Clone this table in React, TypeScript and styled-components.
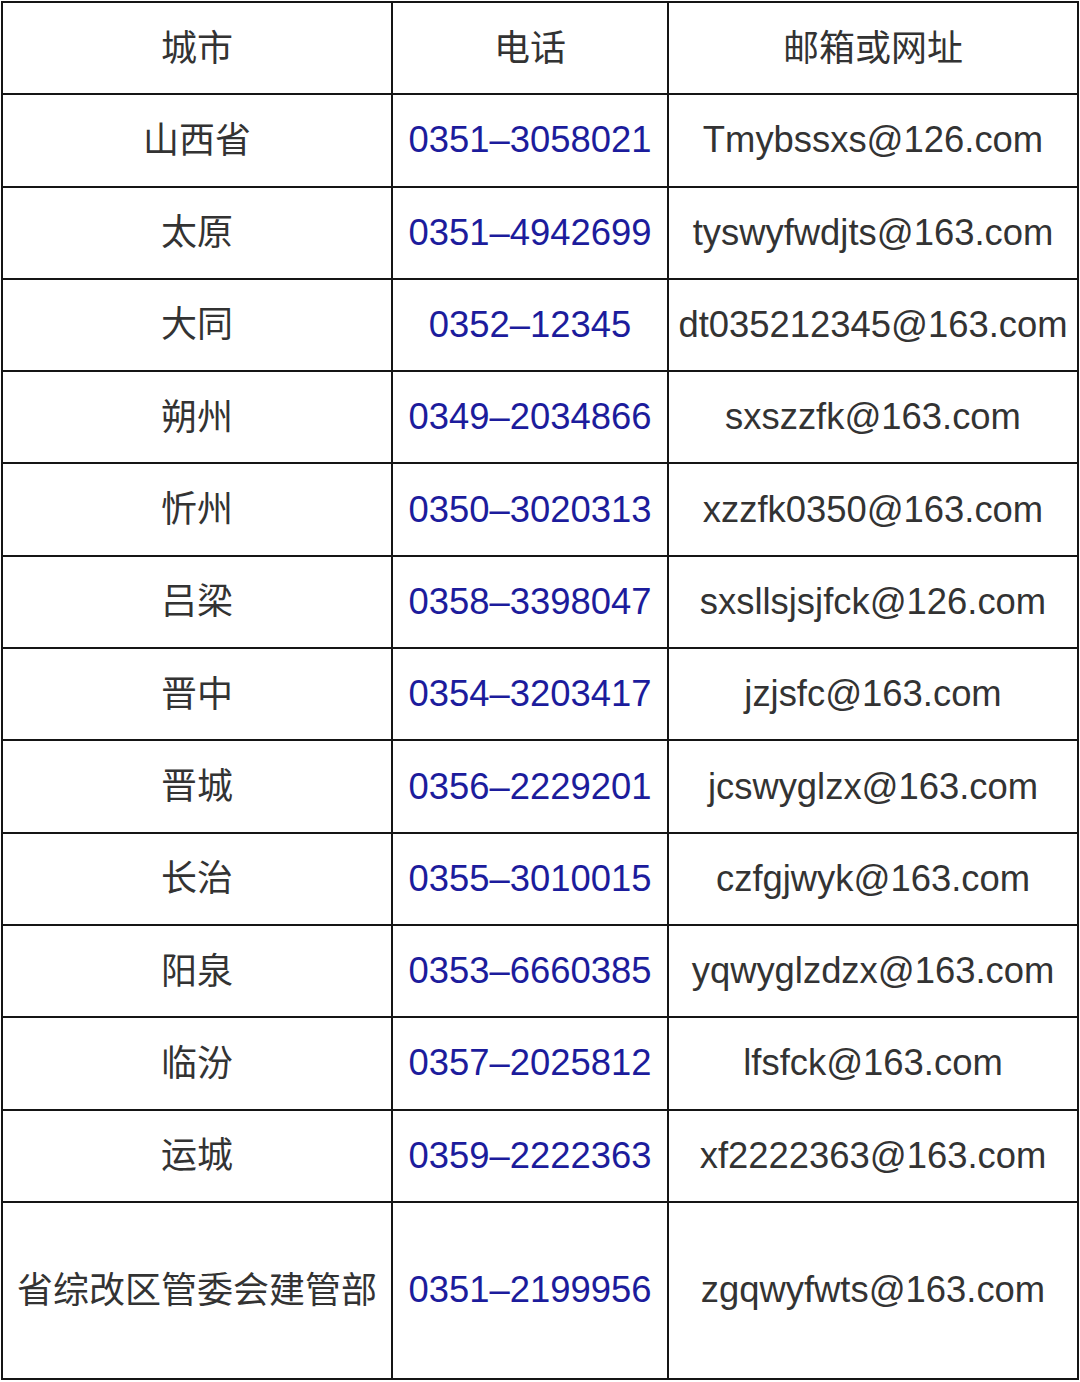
import React from 'react';
import styled, { createGlobalStyle } from 'styled-components';

const GlobalStyle = createGlobalStyle`
  html, body {
    margin: 0;
    padding: 0;
    background: #ffffff;
  }
  body {
    font-family: "Liberation Sans", "Noto Sans CJK SC", sans-serif;
  }
`;

const Page = styled.div`
  padding: 1px 0 0 1px;
  width: 1080px;
  box-sizing: border-box;
`;

const Table = styled.table`
  width: 1076px;
  border-collapse: collapse;
  table-layout: fixed;
  border: 2px solid #151515;
`;

const Row = styled.tr<{ $tall?: boolean }>`
  height: ${(p) => (p.$tall ? '177px' : '92.3px')};
`;

const Cell = styled.td<{ $phone?: boolean }>`
  border: 2px solid #151515;
  padding: 0;
  text-align: center;
  vertical-align: middle;
  white-space: nowrap;
  font-size: 36.4px;
  color: ${(p) => (p.$phone ? '#1c1c9c' : '#333333')};
  font-family: "Liberation Sans", "Noto Sans CJK SC", sans-serif;
`;

const CityText = styled.span`
  display: block;
  font-family: "Noto Sans CJK SC", sans-serif;
  font-size: 36px;
  line-height: 1.2;
  padding-bottom: 6px;
  color: #333333;
`;

const rows: [string, string, string][] = [
  ['山西省', '0351–3058021', 'Tmybssxs@126.com'],
  ['太原', '0351–4942699', 'tyswyfwdjts@163.com'],
  ['大同', '0352–12345', 'dt035212345@163.com'],
  ['朔州', '0349–2034866', 'sxszzfk@163.com'],
  ['忻州', '0350–3020313', 'xzzfk0350@163.com'],
  ['吕梁', '0358–3398047', 'sxsllsjsjfck@126.com'],
  ['晋中', '0354–3203417', 'jzjsfc@163.com'],
  ['晋城', '0356–2229201', 'jcswyglzx@163.com'],
  ['长治', '0355–3010015', 'czfgjwyk@163.com'],
  ['阳泉', '0353–6660385', 'yqwyglzdzx@163.com'],
  ['临汾', '0357–2025812', 'lfsfck@163.com'],
  ['运城', '0359–2222363', 'xf2222363@163.com'],
];

export default function App() {
  return (
    <>
      <GlobalStyle />
      <Page>
        <Table>
          <colgroup>
            <col style={{ width: 390 }} />
            <col style={{ width: 276 }} />
            <col style={{ width: 410 }} />
          </colgroup>
          <tbody>
            <Row>
              <Cell><CityText>城市</CityText></Cell>
              <Cell><CityText>电话</CityText></Cell>
              <Cell><CityText>邮箱或网址</CityText></Cell>
            </Row>
            {rows.map(([city, phone, mail]) => (
              <Row key={city}>
                <Cell><CityText>{city}</CityText></Cell>
                <Cell $phone>{phone}</Cell>
                <Cell>{mail}</Cell>
              </Row>
            ))}
            <Row $tall>
              <Cell><CityText>省综改区管委会建管部</CityText></Cell>
              <Cell $phone>0351–2199956</Cell>
              <Cell>zgqwyfwts@163.com</Cell>
            </Row>
          </tbody>
        </Table>
      </Page>
    </>
  );
}
